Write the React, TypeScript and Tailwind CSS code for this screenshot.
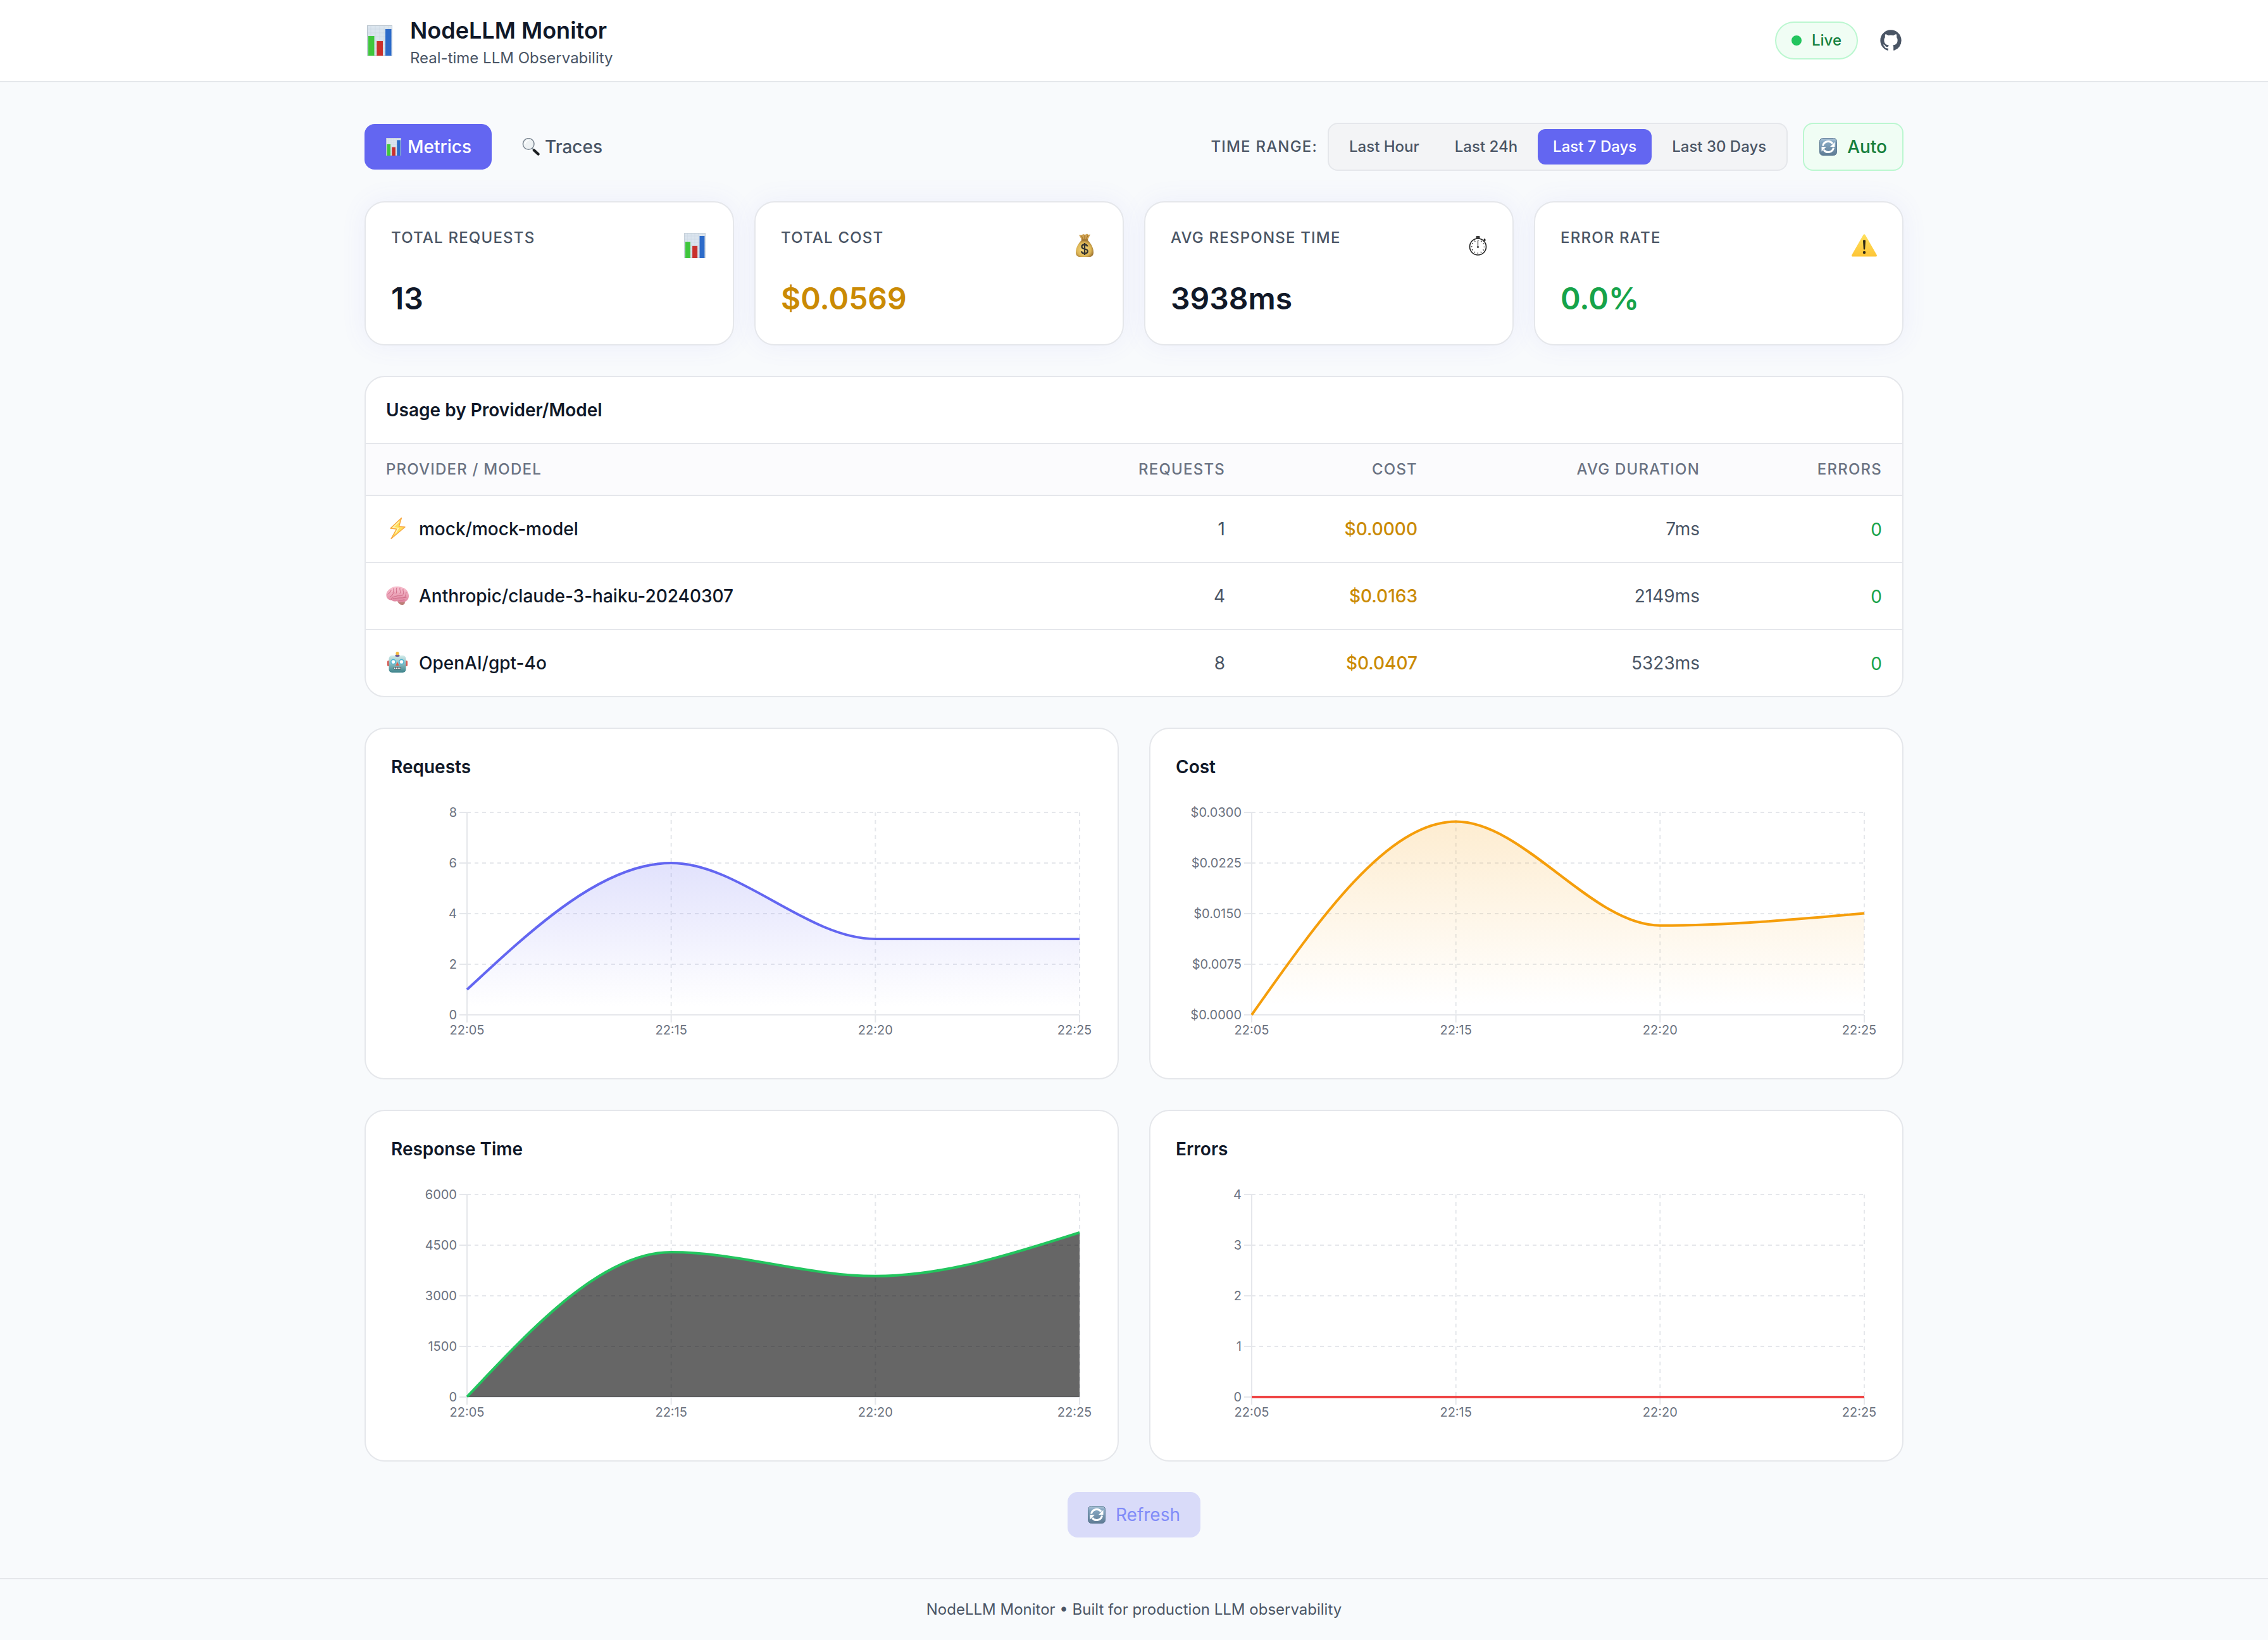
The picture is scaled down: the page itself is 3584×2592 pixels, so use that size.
import React from 'react';

const REQUEST_DATA = [1, 6, 3, 3];
const COST_DATA = [0, 0.02864, 0.01324, 0.01504];
const DURATION_DATA = [7, 4294, 3584, 4875];
const ERROR_DATA = [0, 0, 0, 0];
const TIMES = ['22:05', '22:15', '22:20', '22:25'];

type IconProps = { className?: string };

const ChartIcon = ({ className }: IconProps) => (
  <svg viewBox="0 0 48 48" className={className} aria-hidden="true">
    <rect x="4" y="0" width="40" height="48" fill="#dbe5ee" />
    <path
      d="M4 6h40M4 12h40M4 18h40M4 24h40M4 30h40M4 36h40M4 42h40M10 0v48M17 0v48M24 0v48M31 0v48M38 0v48"
      stroke="#cbd8e4"
      strokeWidth="0.7"
    />
    <rect x="4.5" y="0.5" width="39" height="47" fill="none" stroke="#b9c4ce" />
    <rect x="6" y="17" width="9.5" height="31" fill="#3fc63c" />
    <rect x="19.3" y="25" width="9.7" height="23" fill="#c9302c" />
    <rect x="33" y="6" width="9.5" height="42" fill="#2d6bc9" />
  </svg>
);

const SearchIcon = ({ className }: IconProps) => (
  <svg viewBox="0 0 28 28" className={className} aria-hidden="true">
    <path d="M15.5 16l4 4" stroke="#8b949c" strokeWidth="2" />
    <path d="M19 19.5l6.5 6" stroke="#1c1f22" strokeWidth="4.4" strokeLinecap="round" />
    <circle cx="10.2" cy="9.5" r="8.8" fill="#eef2f4" stroke="#7f8a95" strokeWidth="1.6" />
    <path d="M5 9a6 6 0 015-5" fill="none" stroke="#fff" strokeWidth="1.6" strokeLinecap="round" />
  </svg>
);

const RefreshIcon = ({ className }: IconProps) => (
  <svg viewBox="0 0 28 28" className={className} aria-hidden="true">
    <defs>
      <linearGradient id="refreshFace" x1="0" y1="0" x2="0" y2="1">
        <stop offset="0" stopColor="#b3cadb" />
        <stop offset="0.2" stopColor="#87a8c3" />
        <stop offset="1" stopColor="#5e7b94" />
      </linearGradient>
    </defs>
    <rect x="0.5" y="0.5" width="27" height="27" rx="5" fill="url(#refreshFace)" stroke="#5d7a93" />
    <path d="M5.5 12.500a8.700 8.700 0 0115.500-3.500M22.500 15.500a8.700 8.700 0 01-15.500 3.500" fill="none" stroke="#fff" strokeWidth="3" />
    <path d="M24.500 6.500v7.500h-7.500zM3.500 21.500v-7.500h7.500z" fill="#fff" />
  </svg>
);

const MoneyBagIcon = ({ className }: IconProps) => (
  <svg viewBox="0 0 40 40" className={className} aria-hidden="true">
    <defs>
      <radialGradient id="bagFill" cx="0.45" cy="0.55" r="0.62">
        <stop offset="0" stopColor="#f6dc83" />
        <stop offset="0.65" stopColor="#ddb555" />
        <stop offset="1" stopColor="#94692b" />
      </radialGradient>
    </defs>
    <path d="M15.500 11.500L11 3l4 .6L18 2l2.500 1L24 1.500l2 1.500 3-.5-4.500 9z" fill="#cfa150" />
    <path d="M17.500 10.500l-2.500-6M20 10.500V4M22.500 10.500l2.500-6.500" stroke="#94692b" strokeWidth="0.9" />
    <path
      d="M15.500 12h9c4.500 3 9.500 11 9.500 18.500 0 4.500-2 7-5.500 7.500h-17c-3.500-.5-5.500-3-5.500-7.500 0-7.500 5-15.500 9.500-18.500z"
      fill="url(#bagFill)"
    />
    <rect x="14.500" y="9.800" width="11" height="3" rx="1.500" fill="#a87c35" />
    <path
      d="M24.500 21.500c-.6-2-2.300-3-4.500-3-2.600 0-4.500 1.300-4.500 3.400 0 5 9.300 2.200 9.300 7.200 0 2.200-2 3.600-4.800 3.600-2.600 0-4.500-1.200-5-3.400M20 16v19"
      fill="none"
      stroke="#34332f"
      strokeWidth="2.300"
    />
  </svg>
);

const StopwatchIcon = ({ className }: IconProps) => (
  <svg viewBox="0 0 29 32" className={className} aria-hidden="true">
    <rect x="11.500" y="1" width="6" height="4" rx="1" fill="#3a3a3a" />
    <path d="M24 5.500l2.500 2.500M25 7.500l-2 2" stroke="#222" strokeWidth="1.800" />
    <circle cx="14.500" cy="18" r="13" fill="none" stroke="#222" strokeWidth="1.600" />
    <circle cx="14.500" cy="18" r="10" fill="none" stroke="#222" strokeWidth="2" strokeDasharray="1.2 4.036" strokeDashoffset="0.6" />
    <path d="M14.500 9v10" stroke="#222" strokeWidth="1.200" />
    <circle cx="14.500" cy="18.500" r="1.400" fill="#222" />
  </svg>
);

const WarningIcon = ({ className }: IconProps) => (
  <svg viewBox="0 0 40 40" className={className} aria-hidden="true">
    <defs>
      <linearGradient id="warnFill" x1="0" y1="0" x2="0" y2="1">
        <stop offset="0" stopColor="#ffe05c" />
        <stop offset="1" stopColor="#fdc537" />
      </linearGradient>
    </defs>
    <path d="M18.400 3.200c.7-1.400 2.500-1.400 3.200 0l18 31.600c.8 1.500 0 2.700-1.600 2.700H2c-1.600 0-2.400-1.200-1.600-2.700z" fill="url(#warnFill)" />
    <path d="M18 12.500c0-1.600 4-1.600 4 0l-.8 13c0 1.300-2.400 1.300-2.400 0z" fill="#2f2a16" />
    <circle cx="20" cy="31" r="2.200" fill="#2f2a16" />
  </svg>
);

const BoltIcon = ({ className }: IconProps) => (
  <svg viewBox="0 0 36 36" className={className} aria-hidden="true">
    <path d="M24.500 0.500L7 17l9.500 1.200L8 33.500l22-18.500-9.500-1z" fill="#ffdf5a" stroke="#f7a640" strokeWidth="1.300" strokeLinejoin="round" />
    <path d="M20.500 6.500L11 15.800l8.500 1-4.500 8" fill="none" stroke="#fff6c4" strokeWidth="1.400" />
  </svg>
);

const BrainIcon = ({ className }: IconProps) => (
  <svg viewBox="0 0 36 36" className={className} aria-hidden="true">
    <defs>
      <linearGradient id="brainFill" x1="0" y1="0" x2="0" y2="1">
        <stop offset="0" stopColor="#f9c4d2" />
        <stop offset="1" stopColor="#df86a0" />
      </linearGradient>
    </defs>
    <path d="M18 26c2 4 4 6 7.500 6s5-2.500 4-6z" fill="#bd7f78" />
    <path
      d="M1 20C-1 14 2 9 7 6 12 2 20 2 26 4.500c6 1.500 9.500 7 10 12.500.3 6-3 9.500-8 10.500-4 .8-7 .5-10-1.500-4 .8-7 1-9-1.500-3.500.5-6.500-1.500-8-4.500z"
      fill="url(#brainFill)"
    />
    <path
      d="M3 15c2-2 4-2 5-6M7 19c3-1 3-5 6-6M12 6c-1 3 1 4-1 7M17 5c-2 4 1 5-1 9M22 5c-1 4 2 5 0 9M27 7c-1 3 2 4 0 8M32 12c-1 3 0 4-2 7M8 24c1-5 6-5 9-6s7 1 10-2M11 22c4 0 7-1 10-1s7 0 11-1M20 25c4 0 7-1 9-1"
      fill="none"
      stroke="#c9617f"
      strokeWidth="0.900"
      strokeLinecap="round"
    />
  </svg>
);

const RobotIcon = ({ className }: IconProps) => (
  <svg viewBox="0 0 36 36" className={className} aria-hidden="true">
    <defs>
      <linearGradient id="robotFace" x1="0" y1="0" x2="0" y2="1">
        <stop offset="0" stopColor="#d3ebea" />
        <stop offset="0.5" stopColor="#86babf" />
        <stop offset="1" stopColor="#3d838a" />
      </linearGradient>
    </defs>
    <rect x="2" y="14" width="4" height="9" rx="1.800" fill="#d8574f" />
    <rect x="30" y="14" width="4" height="9" rx="1.800" fill="#d8574f" />
    <rect x="4.500" y="6" width="27" height="27" rx="5" fill="url(#robotFace)" />
    <path d="M14.500 7c-1-4 8-4 7 0-1 1.500-6 1.500-7 0z" fill="#6d5a91" />
    <circle cx="18" cy="2.600" r="2.600" fill="#f5b93d" />
    <circle cx="11.500" cy="16" r="3.600" fill="#fff" stroke="#46b3d2" strokeWidth="1.500" />
    <circle cx="24.500" cy="16" r="3.600" fill="#fff" stroke="#46b3d2" strokeWidth="1.500" />
    <path d="M18 16l2.800 6h-5.600z" fill="#e2604f" />
    <rect x="12" y="24" width="12" height="4" rx="1.500" fill="#3f4f55" />
    <path d="M13 26h10" stroke="#fff" strokeWidth="2.200" strokeDasharray="1.600 1.100" />
  </svg>
);

const GithubIcon = ({ className }: IconProps) => (
  <svg viewBox="0 0 24 24" fill="currentColor" className={className} aria-hidden="true">
    <path d="M12 2C6.477 2 2 6.484 2 12.017c0 4.425 2.865 8.18 6.839 9.504.5.092.682-.217.682-.483 0-.237-.008-.868-.013-1.703-2.782.605-3.369-1.343-3.369-1.343-.454-1.158-1.11-1.466-1.11-1.466-.908-.62.069-.608.069-.608 1.003.07 1.531 1.032 1.531 1.032.892 1.53 2.341 1.088 2.91.832.092-.647.35-1.088.636-1.338-2.22-.253-4.555-1.113-4.555-4.951 0-1.093.39-1.988 1.029-2.688-.103-.253-.446-1.272.098-2.65 0 0 .84-.27 2.75 1.026A9.564 9.564 0 0112 6.844c.85.004 1.705.115 2.504.337 1.909-1.296 2.747-1.027 2.747-1.027.546 1.379.202 2.398.1 2.651.64.7 1.028 1.595 1.028 2.688 0 3.848-2.339 4.695-4.566 4.943.359.309.678.92.678 1.855 0 1.338-.012 2.419-.012 2.747 0 .268.18.58.688.482A10.019 10.019 0 0022 12.017C22 6.484 17.522 2 12 2z" />
  </svg>
);

const stats = [
  { label: 'Total Requests', value: '13', color: 'text-gray-900', icon: ChartIcon, size: 'size-10' },
  { label: 'Total Cost', value: '$0.0569', color: 'text-[#ca8a04]', icon: MoneyBagIcon, size: 'size-10' },
  { label: 'Avg Response Time', value: '3938ms', color: 'text-gray-900', icon: StopwatchIcon, size: 'h-8 w-[29px]' },
  { label: 'Error Rate', value: '0.0%', color: 'text-[#16a34a]', icon: WarningIcon, size: 'size-10' },
];

const providers = [
  { icon: BoltIcon, name: 'mock/mock-model', requests: 1, cost: '$0.0000', duration: '7ms', errors: 0 },
  { icon: BrainIcon, name: 'Anthropic/claude-3-haiku-20240307', requests: 4, cost: '$0.0163', duration: '2149ms', errors: 0 },
  { icon: RobotIcon, name: 'OpenAI/gpt-4o', requests: 8, cost: '$0.0407', duration: '5323ms', errors: 0 },
];

// Plot box inside the 1108x400 drawing
const LEFT = 120;
const RIGHT = 1088;
const TOP = 20;
const BOTTOM = 340;

// Monotone cubic interpolation through equally spaced points
const monotonePath = (pts: number[][]) => {
  const n = pts.length;
  const h = pts[1][0] - pts[0][0];
  const slopes = pts.slice(1).map((p, i) => (p[1] - pts[i][1]) / h);
  const tangents: number[] = new Array(n).fill(0);
  for (let i = 1; i < n - 1; i++) {
    const a = slopes[i - 1];
    const b = slopes[i];
    tangents[i] = (Math.sign(a) + Math.sign(b)) * Math.min(Math.abs(a), Math.abs(b), Math.abs(a + b) / 4) || 0;
  }
  tangents[0] = (3 * slopes[0] - tangents[1]) / 2;
  tangents[n - 1] = (3 * slopes[n - 2] - tangents[n - 2]) / 2;

  let d = `M${pts[0][0]},${pts[0][1]}`;
  for (let i = 1; i < n; i++) {
    const [x0, y0] = pts[i - 1];
    const [x1, y1] = pts[i];
    d += `C${x0 + h / 3},${y0 + (tangents[i - 1] * h) / 3} ${x1 - h / 3},${y1 - (tangents[i] * h) / 3} ${x1},${y1}`;
  }
  return d;
};

type AreaChartProps = {
  id: string;
  title: string;
  data: number[];
  ticks: string[];
  max: number;
  color: string;
  solid?: boolean;
};

const AreaChart = ({ id, title, data, ticks, max, color, solid }: AreaChartProps) => {
  const step = (RIGHT - LEFT) / (data.length - 1);
  const xs = data.map((_, i) => LEFT + i * step);
  const ys = ticks.map((_, i) => BOTTOM - (i * (BOTTOM - TOP)) / (ticks.length - 1));
  const line = monotonePath(data.map((v, i) => [xs[i], BOTTOM - (v / max) * (BOTTOM - TOP)]));

  return (
    <section className="bg-white border-2 border-gray-200 rounded-[32px] p-10">
      <h3 className="text-[28px] leading-10 font-semibold text-gray-900 mb-8">{title}</h3>
      <svg viewBox="0 0 1108 400" className="block w-full" role="img" aria-label={title}>
        <defs>
          <linearGradient id={id} x1="0" y1="0" x2="0" y2="1">
            <stop offset="5%" stopColor={color} stopOpacity={0.3} />
            <stop offset="95%" stopColor={color} stopOpacity={0} />
          </linearGradient>
        </defs>

        <g stroke="#e5e7eb" strokeWidth="2" strokeDasharray="6 6">
          {ys.map((y) => <line key={y} x1={LEFT} x2={RIGHT} y1={y} y2={y} />)}
          {xs.map((x) => <line key={x} x1={x} x2={x} y1={TOP} y2={BOTTOM} />)}
        </g>

        <g stroke="#e5e7eb" strokeWidth="2">
          <line x1={LEFT} x2={LEFT} y1={TOP} y2={BOTTOM} />
          <line x1={LEFT} x2={RIGHT} y1={BOTTOM} y2={BOTTOM} />
          {ys.map((y) => <line key={y} x1={LEFT - 12} x2={LEFT} y1={y} y2={y} />)}
          {xs.map((x) => <line key={x} x1={x} x2={x} y1={BOTTOM} y2={BOTTOM + 12} />)}
        </g>

        <g className="text-[20px]" fill="#6b7280">
          {ys.map((y, i) => (
            <text key={y} x={LEFT - 16} y={y + 7} textAnchor="end">{ticks[i]}</text>
          ))}
          {xs.map((x, i) => (
            <text key={x} x={Math.min(x, 1080)} y={BOTTOM + 31} textAnchor="middle">{TIMES[i]}</text>
          ))}
        </g>

        <path d={`${line}L${RIGHT},${BOTTOM}L${LEFT},${BOTTOM}Z`} fill={solid ? '#000' : `url(#${id})`} fillOpacity={0.6} />
        <path d={line} fill="none" stroke={color} strokeWidth="4" />
      </svg>
    </section>
  );
};

const Header = () => (
  <header className="bg-white border-b-2 border-gray-200">
    <div className="max-w-[2560px] h-32 mx-auto px-16 flex items-center justify-between">
      <div className="flex items-center gap-6">
        <ChartIcon className="size-12" />
        <div>
          <h1 className="text-[36px] leading-14 font-semibold text-gray-900">NodeLLM Monitor</h1>
          <p className="text-[24px] leading-8 text-gray-600">Real-time LLM Observability</p>
        </div>
      </div>
      <div className="flex items-center gap-8">
        <div className="flex items-center gap-4 px-6 py-3 bg-green-50 border-2 border-[#bbf7d0] rounded-full">
          <span className="size-4 rounded-full bg-[#22c55e]" />
          <span className="text-[24px] leading-8 font-medium text-[#15803d]">Live</span>
        </div>
        <a href="#github" aria-label="GitHub" className="text-gray-600">
          <GithubIcon className="size-10" />
        </a>
      </div>
    </div>
  </header>
);

const Toolbar = () => {
  const ranges = ['Last Hour', 'Last 24h', 'Last 7 Days', 'Last 30 Days'];

  return (
    <div className="flex items-center justify-between">
      <nav className="flex items-center gap-4">
        <button className="flex items-center gap-2 px-8 py-4 rounded-2xl bg-[#6366f1] text-[28px] leading-10 font-medium text-white">
          <ChartIcon className="size-7" />
          Metrics
        </button>
        <button className="flex items-center gap-2 px-8 py-4 rounded-2xl text-[28px] leading-10 font-medium text-gray-600">
          <SearchIcon className="size-7" />
          Traces
        </button>
      </nav>
      <div className="flex items-center gap-6">
        <div className="flex items-center gap-4">
          <span className="text-[24px] leading-8 font-medium tracking-wider uppercase text-gray-600">Time Range:</span>
          <div className="flex gap-2 p-2 bg-gray-100 border-2 border-gray-200 rounded-2xl">
            {ranges.map((range) => (
              <button
                key={range}
                className={`px-6 py-3 rounded-xl text-[24px] leading-8 font-medium ${
                  range === 'Last 7 Days' ? 'bg-[#6366f1] text-white' : 'text-gray-600'
                }`}
              >
                {range}
              </button>
            ))}
          </div>
        </div>
        <button className="flex items-center gap-4 px-6 py-4 bg-green-50 border-2 border-[#bbf7d0] rounded-2xl text-[28px] leading-10 font-medium text-[#15803d]">
          <RefreshIcon className="size-7" />
          Auto
        </button>
      </div>
    </div>
  );
};

const StatCards = () => (
  <div className="grid grid-cols-4 gap-8">
    {stats.map((item) => (
      <div
        key={item.label}
        className="bg-white border-2 border-gray-200 rounded-[32px] p-10 shadow-[0_0_40px_rgba(99,102,241,0.08)]"
      >
        <div className="flex items-start justify-between mb-6">
          <span className="text-[24px] leading-8 font-medium tracking-wider uppercase text-gray-600">{item.label}</span>
          <span className="h-14 flex items-center">
            <item.icon className={item.size} />
          </span>
        </div>
        <p className={`text-[48px] leading-16 font-semibold ${item.color}`}>{item.value}</p>
      </div>
    ))}
  </div>
);

const UsageTable = () => (
  <section className="bg-white border-2 border-gray-200 rounded-[32px] overflow-hidden">
    <h2 className="p-8 text-[28px] leading-10 font-semibold text-gray-900">Usage by Provider/Model</h2>
    <table className="w-full table-fixed text-[28px] leading-10 text-gray-600">
      <thead>
        <tr className="bg-[#fbfbfd] border-y-2 border-gray-200 text-[24px] leading-8 tracking-wider uppercase text-gray-500">
          <th className="px-8 py-6 font-medium text-left">Provider / Model</th>
          <th className="w-[320px] px-8 py-6 font-medium text-right">Requests</th>
          <th className="w-[304px] px-8 py-6 font-medium text-right">Cost</th>
          <th className="w-[446px] px-8 py-6 font-medium text-right">Avg Duration</th>
          <th className="w-[288px] px-8 py-6 font-medium text-right">Errors</th>
        </tr>
      </thead>
      <tbody>
        {providers.map((row) => (
          <tr key={row.name} className="border-b-2 border-gray-200 last:border-b-0">
            <td className="px-8 py-6">
              <div className="h-14 flex items-center gap-4 font-medium text-gray-900">
                <row.icon className="size-9" />
                {row.name}
              </div>
            </td>
            <td className="px-8 py-6 text-right">{row.requests}</td>
            <td className="px-8 py-6 text-right font-medium text-[#ca8a04]">{row.cost}</td>
            <td className="px-8 py-6 text-right">{row.duration}</td>
            <td className="px-8 py-6 text-right text-[32px] leading-12">
              <span className="text-[28px] leading-10 text-[#16a34a]">{row.errors}</span>
            </td>
          </tr>
        ))}
      </tbody>
    </table>
  </section>
);

const App = () => {
  return (
    <div className="min-h-screen bg-[#f8fafc] font-[Inter,sans-serif]">
      <Header />
      <main className="max-w-[2560px] mx-auto px-16 py-16 flex flex-col gap-12">
        <Toolbar />
        <StatCards />
        <UsageTable />
        <div className="grid grid-cols-2 gap-12">
          <AreaChart id="requests" title="Requests" data={REQUEST_DATA} ticks={['0', '2', '4', '6', '8']} max={8} color="#6366f1" />
          <AreaChart
            id="cost"
            title="Cost"
            data={COST_DATA}
            ticks={['$0.0000', '$0.0075', '$0.0150', '$0.0225', '$0.0300']}
            max={0.03}
            color="#f59e0b"
          />
          <AreaChart
            id="duration"
            title="Response Time"
            data={DURATION_DATA}
            ticks={['0', '1500', '3000', '4500', '6000']}
            max={6000}
            color="#22c55e"
            solid
          />
          <AreaChart id="errors" title="Errors" data={ERROR_DATA} ticks={['0', '1', '2', '3', '4']} max={4} color="#ef4444" />
        </div>
        <div className="flex justify-center">
          <button className="flex items-center gap-4 px-8 py-4 rounded-2xl bg-[#d9dbf9] text-[28px] leading-10 text-[#818cf8]">
            <RefreshIcon className="size-7" />
            Refresh
          </button>
        </div>
      </main>
      <footer className="border-t-2 border-gray-200 py-8 text-center text-[24px] leading-8 text-gray-600">
        NodeLLM Monitor • Built for production LLM observability
      </footer>
    </div>
  );
};

export default App;
